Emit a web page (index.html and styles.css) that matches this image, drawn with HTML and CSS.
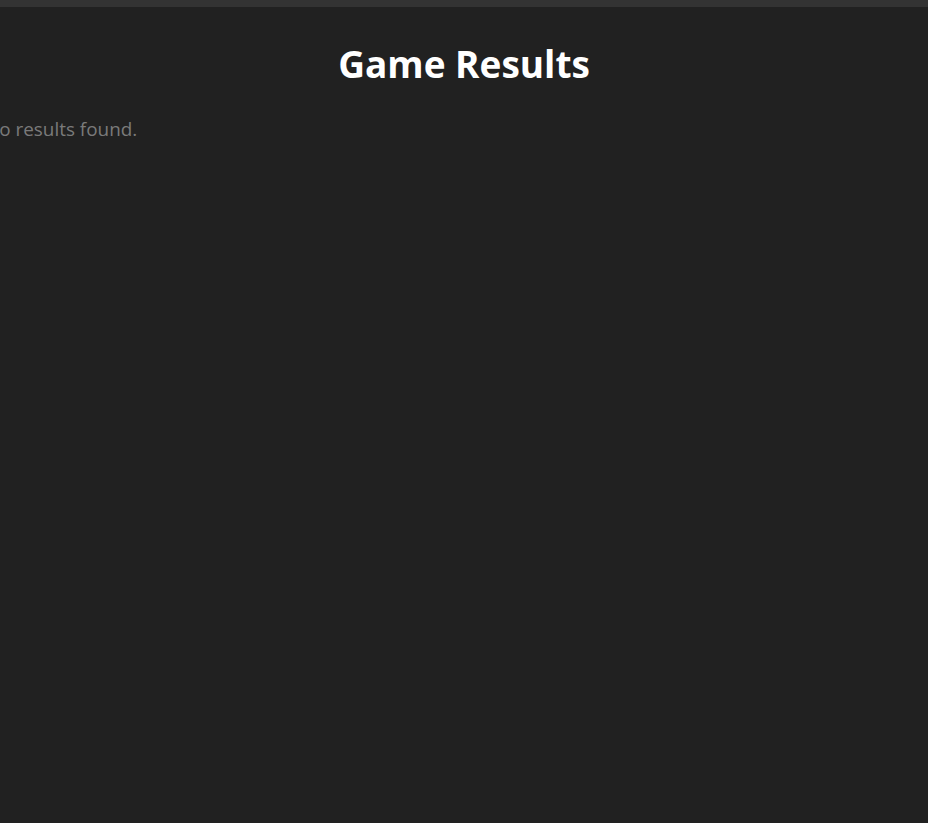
FILE: index.html
```html
<!DOCTYPE html>
<html lang="en">
<head>
<meta charset="utf-8">
<title>Game Results</title>
<link rel="stylesheet" href="styles.css">
</head>
<body>
<div class="topbar"></div>
<main class="page">
  <h1 class="title">Game Results</h1>
  <p class="empty">No results found.</p>
</main>
</body>
</html>
```
FILE: styles.css
```css
html, body {
  margin: 0;
  padding: 0;
  background: #212121;
  height: 100%;
}
body {
  font-family: "Open Sans", "Noto Sans", sans-serif;
  overflow: hidden;
}
.topbar {
  height: 7px;
  background: #333333;
}
.page {
  padding: 0;
}
.title {
  margin: 33px 0 0;
  text-align: center;
  color: #ffffff;
  font-size: 37px;
  font-weight: 700;
  line-height: 48px;
}
.empty {
  margin: 29px 0 0 -15px;
  color: #7a7a7a;
  font-size: 18.9px;
  line-height: 24px;
}
```
